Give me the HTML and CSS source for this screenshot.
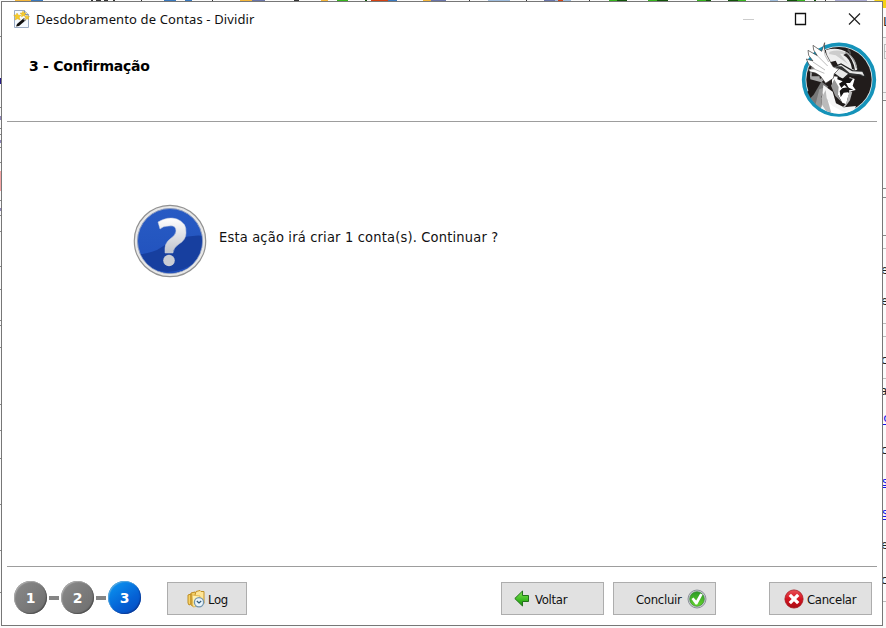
FILE: index.html
```html
<!DOCTYPE html>
<html lang="pt-BR">
<head>
<meta charset="utf-8">
<title>Desdobramento de Contas - Dividir</title>
<link rel="stylesheet" href="styles.css">
</head>
<body>
<svg class="backdrop" viewBox="0 0 886 628" aria-hidden="true">
  <!-- toolbar peeking above the dialog -->
  <g>
    <path fill="#f5b73c" d="M15 0h16v2H15zM240 0h12v2h-12zM321 0h7v2h-7zM423 0h8v2h-8z"/>
    <path fill="#3978bd" d="M31 0h12v2H31zM164 0h12v2h-12zM185 0h7v2h-7zM388 0h9v2h-9z"/>
    <path fill="#6974a8" d="M252 0h13v2h-13zM431 0h15v2h-15zM544 0h18v2h-18z"/>
    <path fill="#9fbddd" d="M488 0h22v2h-22zM555 0h16v2h-16zM770 0h8v2h-8z"/>
    <path fill="#aaa9d2" d="M835 0h32v2h-32z"/>
    <path fill="#333" d="M91 0h2v3h-2zM96 0h5v1h-5zM104 0h4v1h-4zM113 0h2v2h-2zM294 0h5v2h-5zM141 0h1v2h-1zM212 0h1v2h-1zM469 0h1v2h-1zM526 0h1v2h-1zM589 0h1v2h-1zM825 0h1v2h-1z"/>
    <path fill="#d34112" d="M371 0h17v2h-17zM558 0h5v2h-5z"/>
    <path fill="#36b51e" d="M337 0h11v2h-11zM609 0h8v2h-8zM648 0h9v2h-9zM697 0h9v2h-9zM738 0h8v2h-8zM797 0h8v2h-8z"/>
    <path fill="#12530b" d="M365 0h2v2h-2zM617 0h10v2h-10zM657 0h11v2h-11zM706 0h5v2h-5zM728 0h10v2h-10zM787 0h10v2h-10zM814 0h2v2h-2z"/>
    <path fill="#f6d217" d="M874 0h12v8h-5z"/>
  </g>
  <!-- parent window on the left -->
  <path stroke="#888" fill="none" d="M0 36.500h2M0 107.500h2M0 118.500h2M0 128.500h2M0 134.500h2M0 147.500h2M0 162.500h2M0 200.500h2M0 215.500h2M0 231.500h2M0 266.500h2M0 289.500h2M0 320.500h2M0 325.500h2M0 347.500h2M0 404.500h2M0 430.500h2M0 458.500h2M0 504.500h2M0 550.500h2M0 592.500h2"/>
  <path fill="#291b87" d="M0 78h2v6H0z"/>
  <path fill="#8e86b8" d="M0 116h2v4H0zM0 140h2v3H0zM0 208h2v3H0z"/>
  <path fill="#f5a5a5" d="M0 171h2v20H0z"/>
  <!-- parent window on the right -->
  <path fill="#f4f4f4" d="M883 37h3v62h-3z"/>
  <path stroke="#bbb" fill="none" d="M883 37.500h3M884.500 44v14M884 44.500h2M884 51.500h2M884 58.500h2M883 92.500h3M883 248.500h3M883 323.500h3M883 336.500h3M883 378.500h3M883 601.500h3"/>
  <path stroke="#888" fill="none" d="M883 100.500h3M883 188.500h3M883 197.500h3M883 235.500h3"/>
  <g class="peek">
    <text x="881" y="274">e</text><text x="881" y="305">e</text><text x="881" y="364">c</text><text x="880" y="395">a</text>
    <text class="peek-link" x="880" y="422">lo</text><text x="881" y="454">c</text>
    <text class="peek-link" x="874" y="486">os</text><text class="peek-link" x="874" y="517">os</text>
    <text x="881" y="549">e</text><text x="881" y="584">c</text>
    <text x="883" y="26">L</text>
  </g>
  <path fill="#1414e8" d="M883 424h3v1h-3zM883 487h3v1h-3zM883 519h3v1h-3z"/>
</svg>

<main class="dialog">
  <header class="titlebar">
    <svg class="app-icon" viewBox="0 0 17 18">
      <path d="M1.500.5h10l4 4v13h-14z" fill="#f5faff" stroke="#9aabc4"/>
      <path d="M11.500.5v4h4" fill="#dce8f5" stroke="#8495af"/>
      <path d="M4 14l7-6 2 2-7 6-3 .5z" fill="#111"/><path d="M10 9l1.500-1.300 2 2L12 11z" fill="#aaa"/>
      <path d="M4 3l1.500 2.300L8 5 6.300 7.200 7.200 10 4.500 8.800 2 10l.5-3L.7 5H3zM10 1l1 2 2.300-.3-1.500 1.800.8 2-2.200-.8-1.900 1.300.2-2.300L7 3h2zM14 5l.8 1.400 1.700.1-1.100 1.300.2 1.600-1.600-.6-1.300.8.1-1.700-1-1.100 1.500-.4z" fill="#f5cb29" stroke="#dba91c" stroke-width=".4"/>
    </svg>
    <h1 class="title">Desdobramento de Contas - Dividir</h1>
    <svg class="window-controls" viewBox="0 0 120 14">
      <path d="M0 7.500h11" stroke="#ccc"/>
      <path d="M52.500 1.500h10v11h-10z" fill="none" stroke="#111" stroke-width="1.300"/>
      <path d="M106 1.500l11 11M117 1.500l-11 11" fill="none" stroke="#222" stroke-width="1.200"/>
    </svg>
  </header>

  <section class="step-header">
    <h2 class="step-title">3 - Confirmação</h2>
    <svg class="logo" viewBox="33 33 228 231">
      <defs><clipPath id="disc"><circle cx="147" cy="150" r="101"/></clipPath></defs>
      <circle cx="147" cy="149" r="106" fill="#dce4e7" stroke="#1593b9" stroke-width="11"/>
      <g clip-path="url(#disc)">
        <circle cx="147" cy="149" r="98" fill="#211c1b"/>
        <path d="M40 205l55-50 20 15-25 28-12 47z" fill="#777"/>
        <path d="M43 190l50-33-22 37-21 22z" fill="#211c1b"/>
        <path d="M88 178l17-6-10 27-3 50-18-16z" fill="#999"/>
        <path d="M100 165l28 20 10 35 24 12 36-4-14 32H91z" fill="#f5f5f5"/>
        <path d="M94 205l13-25 3 25 22 30 5 24-25-10-16-25z" fill="#bbb"/>
        <path d="M112 207l17 22 33 17 24-8-23 24h-35z" fill="#fff"/>
        <path d="M60 140q-1-34 19-45l29 50-14 12-33-9z" fill="#aaa"/>
        <path d="M65 139q0-19 10-28l13 28zM82 111l18 29-10 7z" fill="#292524"/>
        <path d="M108 60q37-10 65 8 25 22 29 50l-14 15-33-6-18-35-27 7z" fill="#eee"/>
        <path d="M119 65q35-10 54 9l-23-3 24 31-37-26-20-4z" fill="#ccc"/>
        <path d="M160 75q22 11 26 42l9 3q-5-32-25-51z" fill="#242020"/>
        <path d="M166 66q30 17 34 49" fill="none" stroke="#999" stroke-width="4"/>
        <path d="M119 116l34-14 34 20 31 1 9 18-23-6-29-2-18 16-27-20z" fill="#e8e8e8" stroke="#222" stroke-width="4"/>
        <path d="M129 109l26 0 24 20 40 5-34 4-29-17z" fill="#333"/>
        <path d="M126 138l23 3 15 13 16-12 14 5-6 20 9 13-15 4-11 23-14 11-16-29-15-22z" fill="#fff"/>
        <path d="M143 139l19 8 10-4 17 3-9 13-12 0 11 20-16-14-9 9-7-13 11-7-16-6z" fill="#151313"/>
        <path d="M149 183l8-8 16-3 17 7-13 2 4 12-7-6-13 1-9 14z" fill="#171515"/>
        <path d="M133 148l13 23-2 24 11 21-19-18-13-31z" fill="#999"/>
        <path d="M159 195l9-4 6 6-5 26-12-5z" fill="#fff"/>
        <path d="M178 184l9 1-7 26-17 23-5-2 11-12z" fill="#bbb"/>
      </g>
      <path d="M104 38q-5 19 7 39l18 33 17 8-13 13-3 14-23 15-16-22q-14-12-30-12l-7-8 19-2-16-12-8-17 20 6-13-17-2-15 28 16-11-17-2-14 26 18z" fill="#fff" stroke="#393735" stroke-width="2"/>
      <path d="M102 60q0 15 14 36M83 78l30 30M69 96l36 24M70 116l33 14" fill="none" stroke="#bbb" stroke-width="3"/>
      <path d="M173 59q9 5 7 15" fill="none" stroke="#555" stroke-width="5"/>
    </svg>
  </section>

  <section class="content">
    <svg class="question" viewBox="0 0 74 74">
      <defs>
        <linearGradient id="qb" x2="0" y2="1"><stop stop-color="#285bc4"/><stop offset=".5" stop-color="#2456c0"/><stop offset="1" stop-color="#204fbd"/></linearGradient>
        <linearGradient id="qm" x2="0" y2="1"><stop stop-color="#fff"/><stop offset="1" stop-color="#bfc3cc"/></linearGradient>
        <clipPath id="qc"><circle cx="37" cy="37" r="32"/></clipPath>
      </defs>
      <circle cx="37" cy="37" r="35.700" fill="#e7e7e7" stroke="#929292" stroke-width="1.200"/>
      <circle cx="37" cy="37" r="32.500" fill="url(#qb)" stroke="#8d9cc0"/>
      <path clip-path="url(#qc)" d="M2 50q10 1 22-4Q49 29 72 32v45H2z" fill="#173f9f"/>
      <path clip-path="url(#qc)" d="M7 56q25 24 60 0-8 20-30 20T7 56" fill="#2152c0"/>
      <path d="M25 18q10-6 19-3 10 4 9 14 0 7-7 11-6 4-6 9h-8q-1-10 5-14 6-4 6-8 0-6-7-5-6 0-9 3z" fill="url(#qm)" stroke="#c5cde0" stroke-width=".5"/>
      <circle cx="36" cy="56.500" r="5.800" fill="#cacdd4"/>
    </svg>
    <p class="message">Esta ação irá criar 1 conta(s). Continuar ?</p>
  </section>

  <footer class="footer">
    <ol class="steps">
      <li class="step">1</li><li class="link"></li><li class="step">2</li><li class="link"></li><li class="step step-current">3</li>
    </ol>
    <button class="btn btn-log">
      <svg width="18" height="18" viewBox="0 0 18 18">
        <path d="M1 5l3-1v10l-2 1-1-2zM4 3l4-1 1 2h3v10l-7 2-1-2z" fill="#f7d267" stroke="#bd8c22"/>
        <path d="M9 1.500l4-1 1 1h3v12l-9 2V5z" fill="#ffe596" stroke="#c39227"/>
        <path d="M5 5l8 1-1 10-6 1z" fill="#fff0ae" stroke="#d5a63a" stroke-width=".7"/>
        <circle cx="12" cy="12.300" r="4.600" fill="#e8f3fb" stroke="#7395ae" stroke-width="1.300"/>
        <path d="M9.800 11l2.200 2 2.200-2" fill="none" stroke="#2e5878" stroke-width="1.200"/>
      </svg><span>Log</span>
    </button>
    <div class="actions">
      <button class="btn btn-back">
        <svg width="16" height="17" viewBox="0 0 16 17">
          <defs><linearGradient id="ag" x2="0" y2="1"><stop stop-color="#83e557"/><stop offset=".6" stop-color="#3bbb20"/><stop offset="1" stop-color="#188a0c"/></linearGradient></defs>
          <path d="M.8 8.500L8.500 1v4.500H14.500v6H8.500V16z" fill="url(#ag)" stroke="#23721b"/>
        </svg><span>Voltar</span>
      </button>
      <button class="btn btn-finish">
        <span>Concluir</span><svg width="20" height="20" viewBox="0 0 20 20">
          <defs><linearGradient id="cg" x2="0" y2="1"><stop stop-color="#299a24"/><stop offset="1" stop-color="#65d52d"/></linearGradient></defs>
          <circle cx="10" cy="10" r="9" fill="#c9ccd2" stroke="#8d929a"/>
          <circle cx="10" cy="10" r="7.300" fill="url(#cg)" stroke="#398735" stroke-width=".7"/>
          <path d="M4.500 10l2-1.500 2.700 3 4-7 2.500 1-5.500 10H8.500z" fill="#fff"/>
        </svg>
      </button>
      <button class="btn btn-cancel">
        <svg width="20" height="20" viewBox="0 0 20 20">
          <defs><linearGradient id="rg" x2="0" y2="1"><stop stop-color="#e95057"/><stop offset=".5" stop-color="#d41420"/><stop offset="1" stop-color="#a90c14"/></linearGradient></defs>
          <circle cx="10" cy="10" r="9.100" fill="url(#rg)" stroke="#a71820" stroke-width=".8"/>
          <path d="M5.800 5.800l8.400 8.400M14.200 5.800l-8.400 8.400" stroke="#fff" stroke-width="3.300"/>
        </svg><span>Cancelar</span>
      </button>
    </div>
  </footer>
</main>
</body>
</html>
```

FILE: styles.css
```css
* { box-sizing: border-box; }
html, body { width: 886px; height: 628px; overflow: hidden; }
body {
  margin: 0;
  padding: 1px 3px 2px 1px;
  background: #fff;
  color: #111;
  font-family: "DejaVu Sans Condensed", "DejaVu Sans", sans-serif;
  font-stretch: condensed;
}
h1, h2, p, ol { margin: 0; padding: 0; font-weight: normal; white-space: nowrap; }
.backdrop { position: absolute; left: 0; top: 0; width: 886px; height: 628px; background: #fbfbfb; }
.peek { font: 13px "Noto Sans", sans-serif; fill: #222; }
.peek-link { fill: #1414e8; }

.dialog {
  position: relative;
  display: flex;
  flex-direction: column;
  width: 882px;
  height: 625px;
  background: #fff;
  border: 1px solid #777;
}
.titlebar { display: flex; align-items: center; height: 34px; padding-left: 11px; }
.app-icon { width: 17px; height: 18px; }
.title { margin: -1px 0 0 6px; font: 13px/18px "Noto Sans", sans-serif; letter-spacing: .13px; color: #111; }
.window-controls { width: 120px; height: 14px; margin: 0 19px 0 auto; }

.step-header {
  display: flex;
  justify-content: space-between;
  height: 86px;
  margin: 0 5px;
  padding-left: 22px;
  border-bottom: 1px solid #9d9d9d;
}
.step-title {
  margin-top: 21px;
  font: bold 14px/18px "DejaVu Sans", sans-serif;
  font-stretch: normal;
  letter-spacing: -.25px;
  color: #000;
}
.logo { width: 76px; height: 77px; margin-top: 5px; }

.content { display: flex; flex: 1; padding: 82px 0 0 131px; }
.question { width: 74px; height: 74px; }
.message { margin: 23px 0 0 12px; font-size: 14.5px; line-height: 20px; letter-spacing: .18px; }

.footer {
  display: flex;
  align-items: flex-start;
  height: 59px;
  margin: 0 5px;
  padding: 15px 5px 0 7px;
  border-top: 1px solid #9d9d9d;
}
.steps { display: flex; align-items: center; width: 127px; height: 33px; margin-top: -1px; list-style: none; }
.step {
  display: flex;
  align-items: center;
  justify-content: center;
  width: 33px;
  height: 33px;
  border-radius: 50%;
  background: linear-gradient(135deg, #8b8b8b, #6c6c6c);
  box-shadow: inset 1px 1px 1px #ababab, inset -1px -1px 1px #515151;
  color: #fff;
  font: bold 14px "DejaVu Sans", sans-serif;
}
.step-current {
  background: linear-gradient(145deg, #0b9cf5, #0562d5 60%, #0547bd);
  box-shadow: inset 1px 1px 1px #5ba9dc, inset -1px -1px 1px #0b3c99;
}
.link { width: 10px; height: 4px; margin: 0 2px; background: #858585; }
.btn {
  display: flex;
  align-items: center;
  width: 103px;
  height: 33px;
  padding: 0;
  background: #e1e1e1;
  border: 1px solid #adadad;
  color: #111;
  font: 13px/18px "DejaVu Sans Condensed", "DejaVu Sans", sans-serif;
  font-stretch: condensed;
  letter-spacing: -.3px;
}
.btn svg { flex: none; }
.btn span { position: relative; top: 1px; }
.btn-log { width: 80px; margin-left: 26px; padding-left: 19px; gap: 3px; }
.actions { display: flex; margin-left: auto; }
.btn-back { padding-left: 12px; gap: 5px; }
.btn-finish { margin-left: 9px; padding-left: 22px; gap: 5px; }
.btn-cancel { margin-left: 53px; padding-left: 14px; gap: 3px; }
```
